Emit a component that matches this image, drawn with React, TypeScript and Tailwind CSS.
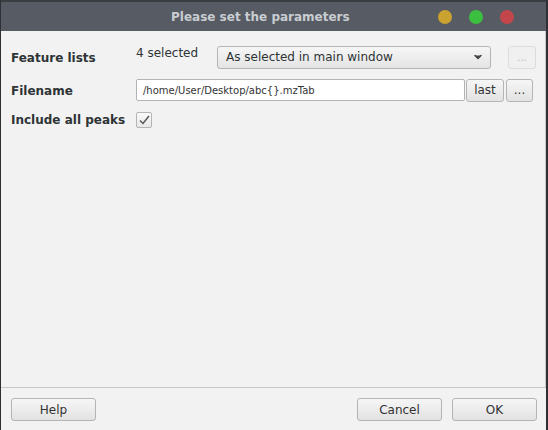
import { ChevronDown } from "lucide-react";

function Btn({ label, className = "" }: { label: string; className?: string }) {
  return (
    <button
      className={`flex h-[23px] items-center justify-center rounded-[3px] border border-[#b4b4b4] bg-gradient-to-b from-[#f6f6f6] to-[#e2e2e2] text-[12px] text-[#333] ${className}`}
    >
      {label}
    </button>
  );
}

export default function App() {
  return (
    <div
      className="flex h-[430px] w-[548px] bg-[#2f3033]"
      style={{ fontFamily: '"DejaVu Sans", sans-serif' }}
    >
      <div className="ml-px flex h-full w-[545px] flex-col">
        <header className="relative flex h-[31px] items-center border-t-2 border-[#3a3d42] bg-[#575b63]">
          <span className="ml-[170px] text-[12px] font-bold text-[#c9cdd2]">
            Please set the parameters
          </span>
          <div className="ml-auto mr-[32px] flex gap-[17px]">
            <span className="h-[14px] w-[14px] rounded-full bg-[#c9a22f]" />
            <span className="h-[14px] w-[14px] rounded-full bg-[#3cbf3f]" />
            <span className="h-[14px] w-[14px] rounded-full bg-[#c3474a]" />
          </div>
        </header>

        <main className="flex flex-1 flex-col bg-[#f2f2f2]">
          <section className="flex flex-1 flex-col gap-[11px] border-b border-r border-[#c9c9c9] pl-[10px] pt-[15px] text-[12px] text-[#2e3436]">
            <div className="flex h-[22px] items-center">
              <span className="w-[125px] pt-px text-[12px] font-bold">Feature lists</span>
              <span className="w-[81px] self-start leading-[15px]">4 selected</span>
              <div className="flex h-[23px] w-[274px] items-center rounded-[3px] border border-[#b4b4b4] bg-gradient-to-b from-[#f6f6f6] to-[#e4e4e4] pl-[8px] pr-[6px] text-[12px]">
                <span>As selected in main window</span>
                <ChevronDown className="ml-auto h-[12px] w-[12px] fill-[#444] text-[#444]" strokeWidth={3} />
              </div>
              <span className="ml-[17px] flex h-[23px] w-[28px] items-center justify-center rounded-[3px] border border-[#dcdcdc] bg-[#f0f0f0] text-[10px] text-[#b8b8b8]">
                ...
              </span>
            </div>
            <div className="flex h-[22px] items-center">
              <span className="w-[125px] pt-px text-[12px] font-bold">Filename</span>
              <div className="flex h-[22px] w-[329px] items-center rounded-[2px] border border-[#b4b4b4] bg-white pl-[6px] text-[10px] text-[#333]">
                /home/User/Desktop/abc{"{}"}.mzTab
              </div>
              <Btn label="last" className="ml-px w-[38px]" />
              <Btn label="..." className="ml-[2px] w-[27px]" />
            </div>
            <div className="flex h-[16px] items-center">
              <span className="w-[125px] text-[12px] font-bold">Include all peaks</span>
              <span className="flex h-[16px] w-[16px] items-center justify-center rounded-[2px] border border-[#b4b4b4] bg-gradient-to-b from-[#fafafa] to-[#e8e8e8]">
                <svg width="11" height="10" viewBox="0 0 11 10">
                  <path d="M1 5.5 L4 8.5 L10 1" fill="none" stroke="#555" strokeWidth="1.5" />
                </svg>
              </span>
            </div>
          </section>

          <footer className="flex h-[42px] items-start pl-[10px] pt-[10px]">
            <Btn label="Help" className="w-[85px]" />
            <Btn label="Cancel" className="ml-auto w-[85px]" />
            <Btn label="OK" className="ml-[10px] mr-[9px] w-[85px]" />
          </footer>
        </main>
      </div>
    </div>
  );
}
